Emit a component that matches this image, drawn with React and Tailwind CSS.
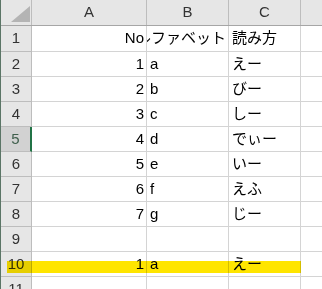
import React from "react";

const font = { fontFamily: "'Liberation Sans', 'Noto Sans CJK JP', sans-serif" };

const rows = [
  ["No", "アルファベット", "読み方"],
  ["1", "a", "えー"],
  ["2", "b", "びー"],
  ["3", "c", "しー"],
  ["4", "d", "でぃー"],
  ["5", "e", "いー"],
  ["6", "f", "えふ"],
  ["7", "g", "じー"],
  ["", "", ""],
  ["1", "a", "えー"],
  ["", "", ""],
];

const cols = "grid-cols-[31px_115px_82px_72px_1fr]";

const Row = ({ n, cells, tall }) => {
  const selected = n === 5;
  return (
    <div className={`grid ${cols} ${tall ? "h-[26px]" : "h-[25px]"}`}>
      <div
        className={`flex items-center justify-center border-b border-r border-[#bdbdbd] text-[15px] ${
          selected ? "bg-[#d2d2d2] text-[#3f5f4c] border-r-2 border-r-[#217346]" : "bg-[#e6e6e6] text-[#333]"
        }`}
      >
        {n}
      </div>
      <div className="flex items-center justify-end pr-[2px] border-b border-r border-[#d4d4d4] text-[15px] text-black">
        {cells[0]}
      </div>
      <div className="flex items-center justify-end overflow-hidden whitespace-nowrap pr-[2px] border-b border-r border-[#d4d4d4] text-[15px] text-black">
        <span className={cells[1].length > 1 ? "" : "mr-auto pl-[3px]"}>{cells[1]}</span>
      </div>
      <div className="flex items-center pl-[3px] border-b border-r border-[#d4d4d4] text-[15px] text-black whitespace-nowrap">
        {cells[2]}
      </div>
      <div className="border-b border-[#d4d4d4]" />
    </div>
  );
};

export default function App() {
  return (
    <div className="relative w-[322px] h-[289px] overflow-hidden bg-white border-l border-[#5b7566]" style={font}>
      {/* column headers */}
      <div className={`grid ${cols} h-[26px] bg-[#e6e6e6] border-b border-[#a6a6a6] text-[15px] text-[#333]`}>
        <div className="relative border-r border-[#bdbdbd]">
          <svg className="absolute left-[10px] top-[6px]" width="19" height="16" viewBox="0 0 19 16">
            <polygon points="19,0 19,16 0,16" fill="#b4b4b4" />
          </svg>
        </div>
        <div className="flex items-center justify-center border-r border-[#bdbdbd]">A</div>
        <div className="flex items-center justify-center border-r border-[#bdbdbd]">B</div>
        <div className="flex items-center justify-center border-r border-[#bdbdbd]">C</div>
        <div />
      </div>

      {rows.map((cells, i) => (
        <Row key={i} n={i + 1} cells={cells} tall={i === 0} />
      ))}

      {/* highlighter stroke across row 10 */}
      <div className="absolute left-[6px] top-[261px] w-[294px] h-[12px] bg-[#ffe500] mix-blend-multiply" />
    </div>
  );
}
